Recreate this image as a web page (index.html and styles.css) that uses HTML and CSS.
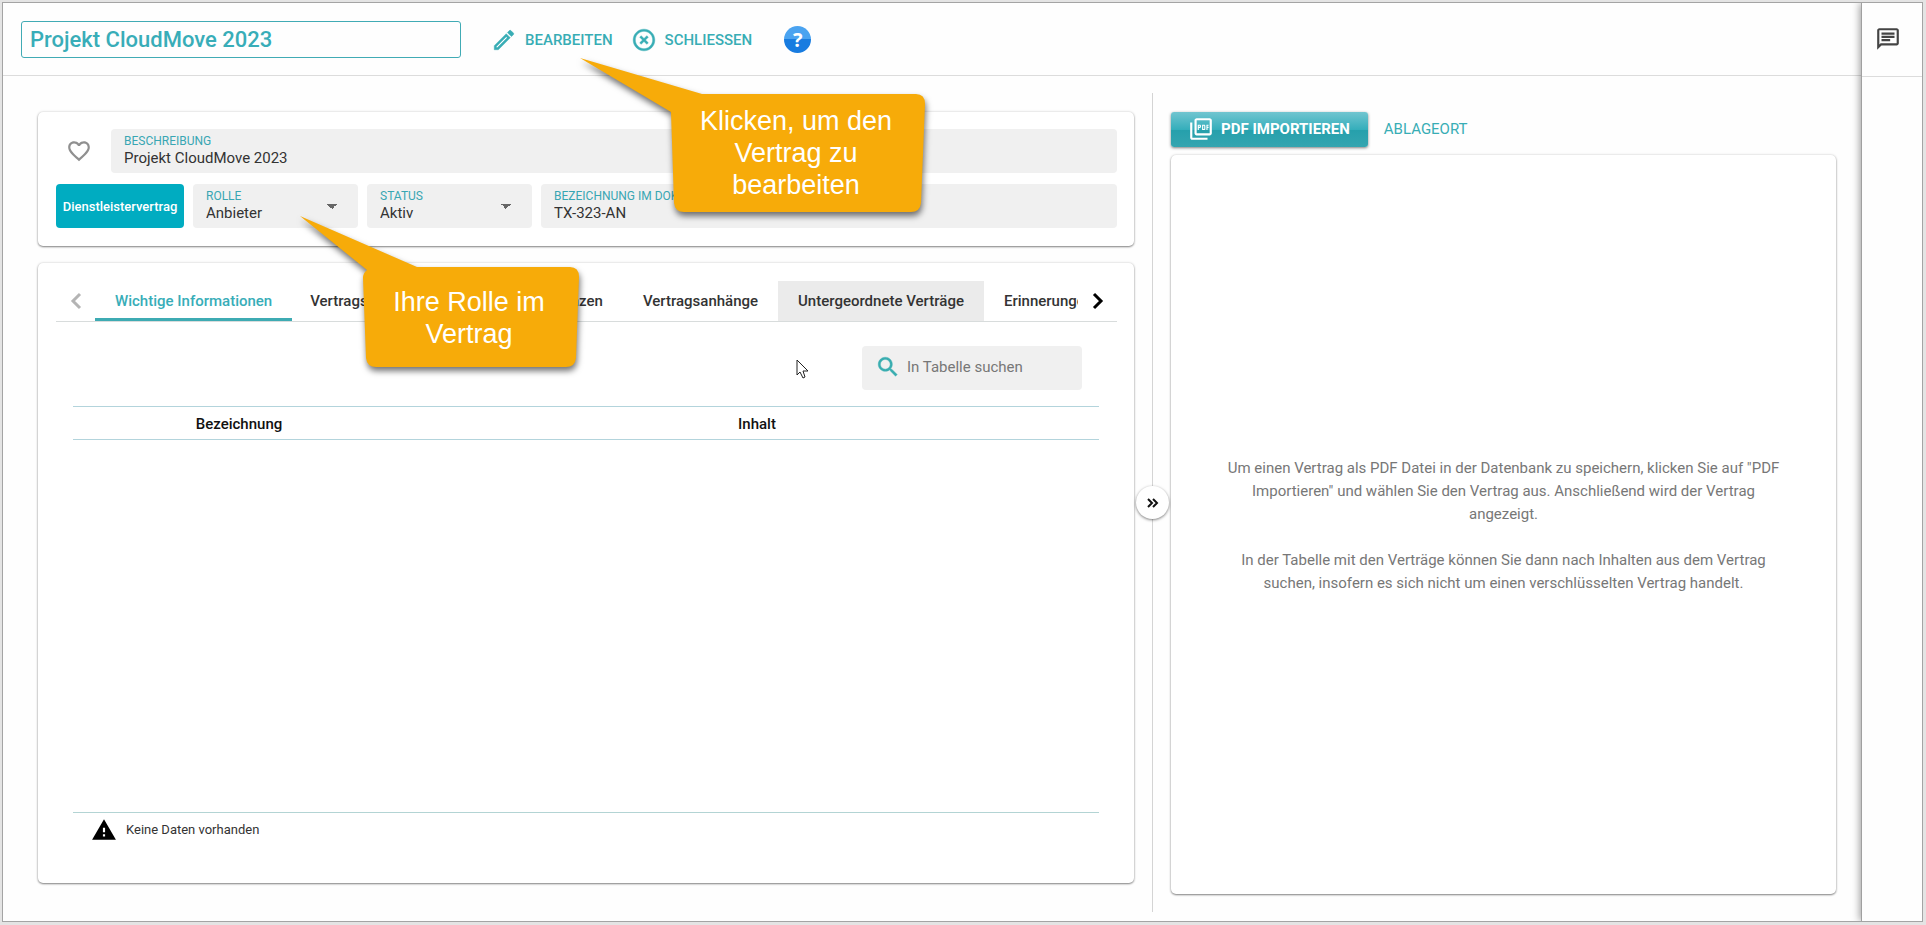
FILE: index.html
```html
<!DOCTYPE html>
<html lang="de">
<head>
<meta charset="utf-8">
<meta name="viewport" content="width=device-width, initial-scale=1">
<title>Projekt CloudMove 2023</title>
<link rel="stylesheet" href="styles.css">
</head>
<body>
<div class="window">
  <div class="main">
    <header class="toolbar">
      <input class="title-input" type="text" aria-label="Vertragstitel" value="Projekt CloudMove 2023">
      <div class="actions">
        <button class="action" type="button">
          <svg class="icon" viewBox="0 0 24 24"><path d="M14.06 9.02l.92.92L5.92 19H5v-.92l9.06-9.06M17.66 3c-.25 0-.51.1-.7.29l-1.83 1.83 3.75 3.75 1.83-1.83c.39-.39.39-1.02 0-1.41l-2.34-2.34c-.2-.2-.45-.29-.71-.29zm-3.6 3.19L3 17.25V21h3.75L17.81 9.94l-3.75-3.75z"/></svg>
          <span>BEARBEITEN</span>
        </button>
        <button class="action" type="button">
          <svg class="icon" viewBox="0 0 24 24"><path d="M14.59 8L12 10.59 9.41 8 8 9.41 10.59 12 8 14.59 9.41 16 12 13.41 14.59 16 16 14.59 13.41 12 16 9.41 14.59 8zM12 2C6.47 2 2 6.47 2 12s4.47 10 10 10 10-4.47 10-10S17.53 2 12 2zm0 18c-4.41 0-8-3.59-8-8s3.59-8 8-8 8 3.59 8 8-3.59 8-8 8z"/></svg>
          <span>SCHLIESSEN</span>
        </button>
        <button class="help" type="button" aria-label="Hilfe">?</button>
      </div>
    </header>

    <main class="workspace">
      <div class="left">
        <section class="card details">
          <div class="row">
            <button class="favorite" type="button" aria-label="Favorit">
              <svg class="icon" viewBox="0 0 24 24"><path d="M16.5 3c-1.74 0-3.41.81-4.5 2.09C10.91 3.81 9.24 3 7.5 3 4.42 3 2 5.42 2 8.5c0 3.78 3.4 6.86 8.55 11.54L12 21.35l1.45-1.32C18.6 15.36 22 12.28 22 8.5 22 5.42 19.58 3 16.5 3zm-4.4 15.55l-.1.1-.1-.1C7.14 14.24 4 11.39 4 8.5 4 6.5 5.5 5 7.5 5c1.54 0 3.04.99 3.57 2.36h1.87C13.46 5.99 14.96 5 16.5 5c2 0 3.5 1.5 3.5 3.5 0 2.89-3.14 5.74-7.9 10.05z"/></svg>
            </button>
            <div class="field grow">
              <label for="desc">BESCHREIBUNG</label>
              <input id="desc" type="text" value="Projekt CloudMove 2023" readonly>
            </div>
          </div>
          <div class="row">
            <span class="badge">Dienstleistervertrag</span>
            <div class="field choice">
              <label for="role">ROLLE</label>
              <select id="role"><option>Anbieter</option></select>
            </div>
            <div class="field choice">
              <label for="status">STATUS</label>
              <select id="status"><option>Aktiv</option></select>
            </div>
            <div class="field grow">
              <label for="docname">BEZEICHNUNG IM DOKUMENT</label>
              <input id="docname" type="text" value="TX-323-AN" readonly>
            </div>
          </div>
        </section>

        <section class="card content">
          <div class="tabbar">
            <button class="pager pager-off" type="button" aria-label="Zurück"><svg viewBox="0 0 12 18"><path d="M10 2L3 9l7 7"/></svg></button>
            <div class="tabs" role="tablist">
              <button class="tab tab-active" role="tab" type="button" aria-selected="true">Wichtige Informationen</button>
              <button class="tab tab-wide" role="tab" type="button">Vertragsart</button>
              <button class="tab" role="tab" type="button">Finanzen</button>
              <button class="tab" role="tab" type="button">Vertragsanhänge</button>
              <button class="tab tab-hover" role="tab" type="button">Untergeordnete Verträge</button>
              <button class="tab" role="tab" type="button">Erinnerungen</button>
            </div>
            <button class="pager" type="button" aria-label="Weiter"><svg viewBox="0 0 12 18"><path d="M2 2l7 7-7 7"/></svg></button>
          </div>
          <div class="search">
            <svg class="icon" viewBox="0 0 24 24"><path d="M15.5 14h-.79l-.28-.27C15.41 12.59 16 11.11 16 9.5 16 5.91 13.09 3 9.5 3S3 5.91 3 9.5 5.91 16 9.5 16c1.61 0 3.09-.59 4.23-1.57l.27.28v.79l5 4.99L20.49 19l-4.99-5zm-6 0C7.01 14 5 11.99 5 9.5S7.01 5 9.5 5 14 7.01 14 9.5 11.99 14 9.5 14z"/></svg>
            <input type="search" aria-label="In Tabelle suchen" placeholder="In Tabelle suchen">
          </div>
          <table class="table">
            <thead><tr><th class="col-name">Bezeichnung</th><th>Inhalt</th></tr></thead>
          </table>
          <div class="empty">
            <svg class="icon" viewBox="0 0 24 24"><path d="M1 21h22L12 2 1 21zm12-3h-2v-2h2v2zm0-4h-2v-4h2v4z"/></svg>
            <span>Keine Daten vorhanden</span>
          </div>
        </section>
      </div>

      <div class="divider">
        <button class="collapse" type="button" aria-label="Einklappen"><svg viewBox="0 0 12 10"><path d="M1 1l4 4-4 4M6 1l4 4-4 4"/></svg></button>
      </div>

      <div class="right">
        <div class="pdf-actions">
          <button class="import" type="button">
            <svg class="icon" viewBox="0 0 24 24"><path d="M20 2H8c-1.100 0-2 .9-2 2v12c0 1.100.9 2 2 2h12c1.100 0 2-.9 2-2V4c0-1.100-.9-2-2-2zm0 14H8V4h12v12zM4 6H2v14c0 1.100.9 2 2 2h14v-2H4V6zm12 6V9c0-.55-.45-1-1-1h-2v5h2c.55 0 1-.45 1-1zm-2-3h1v3h-1V9zm4 2h1v-1h-1V9h1V8h-2v5h1zm-8 0h1c.55 0 1-.45 1-1V9c0-.55-.45-1-1-1H9v5h1v-2zm0-2h1v1h-1V9z"/></svg>
            <span>PDF IMPORTIEREN</span>
          </button>
          <button class="location" type="button">ABLAGEORT</button>
        </div>
        <section class="card viewer">
          <p>Um einen Vertrag als PDF Datei in der Datenbank zu speichern, klicken Sie auf "PDF Importieren" und wählen Sie den Vertrag aus. Anschließend wird der Vertrag angezeigt.</p>
          <p>In der Tabelle mit den Verträge können Sie dann nach Inhalten aus dem Vertrag suchen, insofern es sich nicht um einen verschlüsselten Vertrag handelt.</p>
        </section>
      </div>
    </main>
  </div>

  <aside class="side">
    <div class="side-head">
      <button class="chat" type="button" aria-label="Kommentare">
        <svg class="icon" viewBox="0 0 24 24"><path d="M4 4h16v12H5.170L4 17.170V4m0-2c-1.100 0-1.990.9-1.990 2L2 22l4-4h14c1.100 0 2-.9 2-2V4c0-1.100-.9-2-2-2H4zm2 10h8v2H6v-2zm0-3h12v2H6V9zm0-3h12v2H6V6z"/></svg>
      </button>
    </div>
  </aside>

  <div class="callout callout-edit">
    <svg class="callout-shape" viewBox="0 0 350 160"><path d="M0 0L122 36H336Q345 36 345 46L341 145Q340 154 331 154H104Q95 154 94 145L91 54Z"/></svg>
    <p>Klicken, um den<br>Vertrag zu<br>bearbeiten</p>
  </div>
  <div class="callout callout-role">
    <svg class="callout-shape" viewBox="0 0 290 160"><path d="M0 0L117 51H270Q279 51 279 61L276 142Q275 151 266 151H76Q67 151 66 142L63 62Q63 57 67 54Z"/></svg>
    <p>Ihre Rolle im<br>Vertrag</p>
  </div>
  <svg class="pointer" viewBox="0 0 13 20"><path d="M1 1v15l3-3 3 6 2-1-2-6h5z"/></svg>
</div>
</body>
</html>
```
FILE: styles.css
```css
* { box-sizing: border-box; }

body {
  margin: 0;
  font-family: Roboto, "Liberation Sans", sans-serif;
  font-size: 15px;
  color: #333;
  background: #e4e4e4;
}

button, input, select { font: inherit; color: inherit; border: 0; background: none; padding: 0; margin: 0; outline: 0; }
.icon { display: block; flex: none; width: 26px; height: 26px; fill: currentColor; }

.window {
  position: relative;
  display: flex;
  min-height: calc(100vh - 5px);
  margin: 2px 3px 3px 2px;
  border: 1px solid #a4a4a4;
  background: #fefefe;
}

.main { flex: 1; min-width: 0; display: flex; flex-direction: column; }

.toolbar {
  display: flex;
  align-items: center;
  gap: 30px;
  height: 73px;
  padding: 0 18px;
  border-bottom: 1px solid #dcdcdc;
}
.title-input {
  width: 440px;
  height: 37px;
  padding: 0 8px;
  border: 1px solid #41abb5;
  border-radius: 3px;
  font-size: 22px;
  font-weight: 500;
  color: #38adb8;
}
.actions { display: flex; align-items: center; gap: 18px; padding-top: 1px; }
.action { display: flex; align-items: center; gap: 8px; color: #38adb5; font-weight: 500; }
.action .icon { stroke: currentColor; stroke-width: .4; }
.help {
  width: 27px;
  height: 27px;
  margin-left: 14px;
  border-radius: 50%;
  background: linear-gradient(#4aa3f0 0 50%, #187ce0 50% 100%);
  color: #fff;
  font: bold 20px/27px "Open Sans", sans-serif;
}

.workspace {
  flex: 1;
  display: grid;
  grid-template-columns: minmax(0, 1096fr) 37px minmax(0, 665fr);
  padding: 17px 26px 9px 35px;
}
.left { display: flex; flex-direction: column; gap: 17px; padding: 19px 0 29px; }
.card { border-radius: 5px; background: #fff; box-shadow: 0 1px 2px rgba(0,0,0,.45), 0 0 3px rgba(0,0,0,.15); }

.details { display: flex; flex-direction: column; gap: 11px; padding: 17px 17px 18px 18px; }
.row { display: flex; gap: 9px; }
.favorite { width: 46px; padding: 0 10px; color: #909090; }
.field {
  display: flex;
  flex-direction: column;
  height: 44px;
  padding: 4px 13px;
  border-radius: 4px;
  background: #f0f0f0;
}
.grow { flex: 1; min-width: 0; }
.field label { font-size: 12px; line-height: 16px; color: #38a6b3; }
.field input, .field select { width: 100%; height: 19px; line-height: 19px; color: #333; }
.choice { width: 165px; }
.choice select {
  appearance: none;
  background: linear-gradient(to bottom right, #666 50%, transparent 50%) no-repeat right 8px top 0 / 5px 5px,
              linear-gradient(to bottom left, #666 50%, transparent 50%) no-repeat right 13px top 0 / 5px 5px;
}
.badge {
  display: grid;
  place-items: center;
  width: 128px;
  border-radius: 4px;
  background: #00acc1;
  color: #fff;
  font-size: 13px;
  font-weight: 500;
}

.content { flex: 1; display: flex; flex-direction: column; padding: 18px 17px 43px 18px; }
.tabbar { display: flex; border-bottom: 1px solid #d8dcdc; }
.pager { flex: none; display: grid; place-items: center; width: 39px; height: 40px; color: #000; }
.pager svg { width: 12px; height: 18px; fill: none; stroke: currentColor; stroke-width: 3; }
.pager-off { color: #b4b4b4; }
.tabs { flex: 1; min-width: 0; display: flex; overflow: hidden; }
.tab { flex: none; height: 40px; padding: 0 20px; font-weight: 500; color: #333; }
.tab-active { color: #38adb8; box-shadow: inset 0 -3px #3eabb3; }
.tab-wide { width: 230px; padding-left: 18px; text-align: left; }
.tab-hover { background: #ebebeb; }

.search {
  display: flex;
  align-items: center;
  gap: 6px;
  align-self: flex-end;
  width: 220px;
  height: 44px;
  margin: 24px 35px 16px 0;
  padding: 0 13px 2px;
  border-radius: 4px;
  background: #f0f0f0;
}
.search .icon { color: #38adb0; stroke: currentColor; stroke-width: .4; }
.search input { flex: 1; min-width: 0; }
.search input::placeholder { color: #777; opacity: 1; }

.table { margin: 0 18px 0 17px; border-collapse: collapse; table-layout: fixed; }
.table tr { height: 33px; border: solid #b3d4dc; border-width: 1px 0; }
.table th { padding: 2px 22px 0 0; font-weight: 500; color: #111; }
.table .col-name { width: 364px; padding-right: 32px; }

.empty {
  display: flex;
  align-items: center;
  gap: 9px;
  height: 28px;
  margin: auto 18px 0 17px;
  padding: 6px 18px 0;
  border-top: 1px solid #b3d4d4;
  font-size: 13px;
}
.empty .icon { color: #000; }

.divider { display: grid; place-items: center; background: linear-gradient(#d4d4d4, #d4d4d4) no-repeat 18px 0 / 1px 100%; }
.collapse {
  display: grid;
  place-items: center;
  width: 33px;
  height: 33px;
  border-radius: 50%;
  background: #fff;
  box-shadow: 0 1px 3px rgba(0,0,0,.5);
}
.collapse svg { width: 12px; height: 10px; fill: none; stroke: #111; stroke-width: 2; }

.right { display: flex; flex-direction: column; gap: 8px; padding: 19px 0 18px; }
.pdf-actions { display: flex; align-items: center; gap: 16px; }
.import {
  display: flex;
  align-items: center;
  gap: 7px;
  height: 35px;
  padding: 0 18px 2px 17px;
  border-radius: 3px;
  background: linear-gradient(#71c5d0 0%, #35aebb 50%, #26a0ac 52%, #35a5b0 100%);
  box-shadow: 0 1px 3px rgba(0,0,0,.5);
  color: #fff;
  font-weight: 700;
}
.location { padding-bottom: 2px; color: #38adb5; }
.viewer {
  flex: 1;
  display: flex;
  flex-direction: column;
  justify-content: center;
  gap: 23px;
  padding: 3px 48px 0;
  text-align: center;
  line-height: 23px;
  color: #777;
}
.viewer p { margin: 0; }

.side { width: 60px; background: #fefefe; box-shadow: -1px 0 #a0a0a0, -2px 0 8px rgba(0,0,0,.4); clip-path: inset(0 0 0 -14px); }
.side-head { height: 74px; padding: 23px 13px; border-bottom: 1px solid #dcdcdc; }
.chat { color: #444; }

.callout { position: absolute; color: #fff; font: 27px/32px "Liberation Sans", Arial, sans-serif; text-align: center; }
.callout-shape { position: absolute; inset: 0; width: 100%; fill: #f7ab09; filter: drop-shadow(1px 4px 3px rgba(0,0,0,.55)); overflow: visible; }
.callout p { position: relative; margin: 0; }
.callout-edit { left: 577px; top: 55px; width: 350px; height: 160px; padding: 47px 8px 0 90px; }
.callout-role { left: 297px; top: 213px; width: 290px; height: 160px; padding: 70px 14px 0 62px; }
.pointer { position: absolute; left: 793px; top: 356px; width: 13px; height: 20px; fill: #fff; stroke: #222; }
```
